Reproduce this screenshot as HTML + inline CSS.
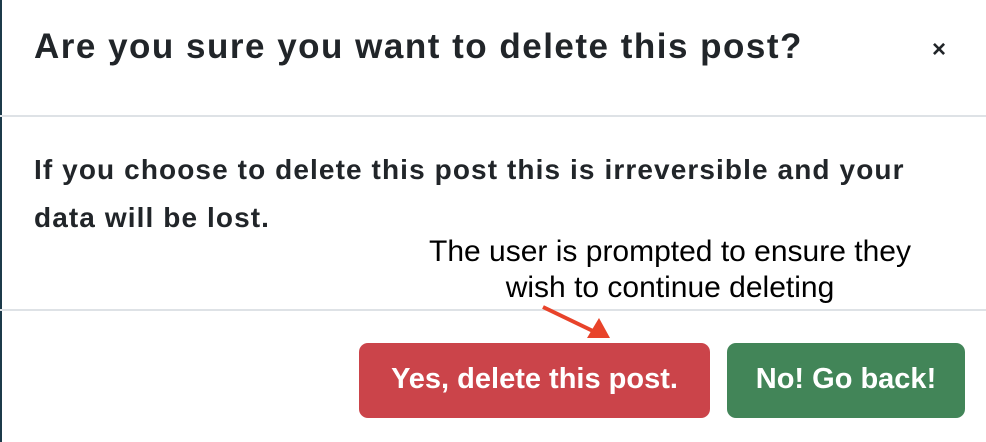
<!DOCTYPE html>
<html><head><style>
body{margin:0;width:986px;height:442px;background:#fff;position:relative;overflow:hidden;font-family:"Liberation Sans",sans-serif;color:#212529}
.l{position:absolute;left:0;top:0;width:2px;height:442px;background:#1c3a4a}
.t{position:absolute;left:34px;top:27px;font-size:35px;font-weight:bold;letter-spacing:1.5px;white-space:nowrap}
.x{position:absolute;left:932px;top:36px;font-size:24px;font-weight:bold}
.hr{position:absolute;left:0;width:986px;height:2px;background:#dee2e6}
.b{position:absolute;left:34px;top:146px;font-size:28px;font-weight:bold;line-height:48px;letter-spacing:1.1px;white-space:nowrap}
.a{position:absolute;left:370px;width:600px;top:234px;text-align:center;font-size:30px;line-height:36px;color:#000}
.btn{position:absolute;top:343px;height:75px;border-radius:9px;color:#fff;font-weight:bold;font-size:29px;display:flex;align-items:center;justify-content:center;padding-bottom:2px;box-sizing:border-box}
</style></head><body>
<div class="l"></div>
<div class="t">Are you sure you want to delete this post?</div>
<div class="x">×</div>
<div class="hr" style="top:115px"></div>
<div class="b">If you choose to delete this post this is irreversible and your<br>data will be lost.</div>
<div class="a">The user is prompted to ensure they<br>wish to continue deleting</div>
<div class="hr" style="top:309px"></div>
<svg style="position:absolute;left:0;top:0" width="986" height="442"><line x1="543" y1="307" x2="595" y2="332" stroke="#e8432a" stroke-width="4"/><polygon points="610,338 587,338 599,318" fill="#e8432a"/></svg>
<div class="btn" style="left:359px;width:351px;background:#cb444a">Yes, delete this post.</div>
<div class="btn" style="left:727px;width:238px;background:#428558">No! Go back!</div>
</body></html>
